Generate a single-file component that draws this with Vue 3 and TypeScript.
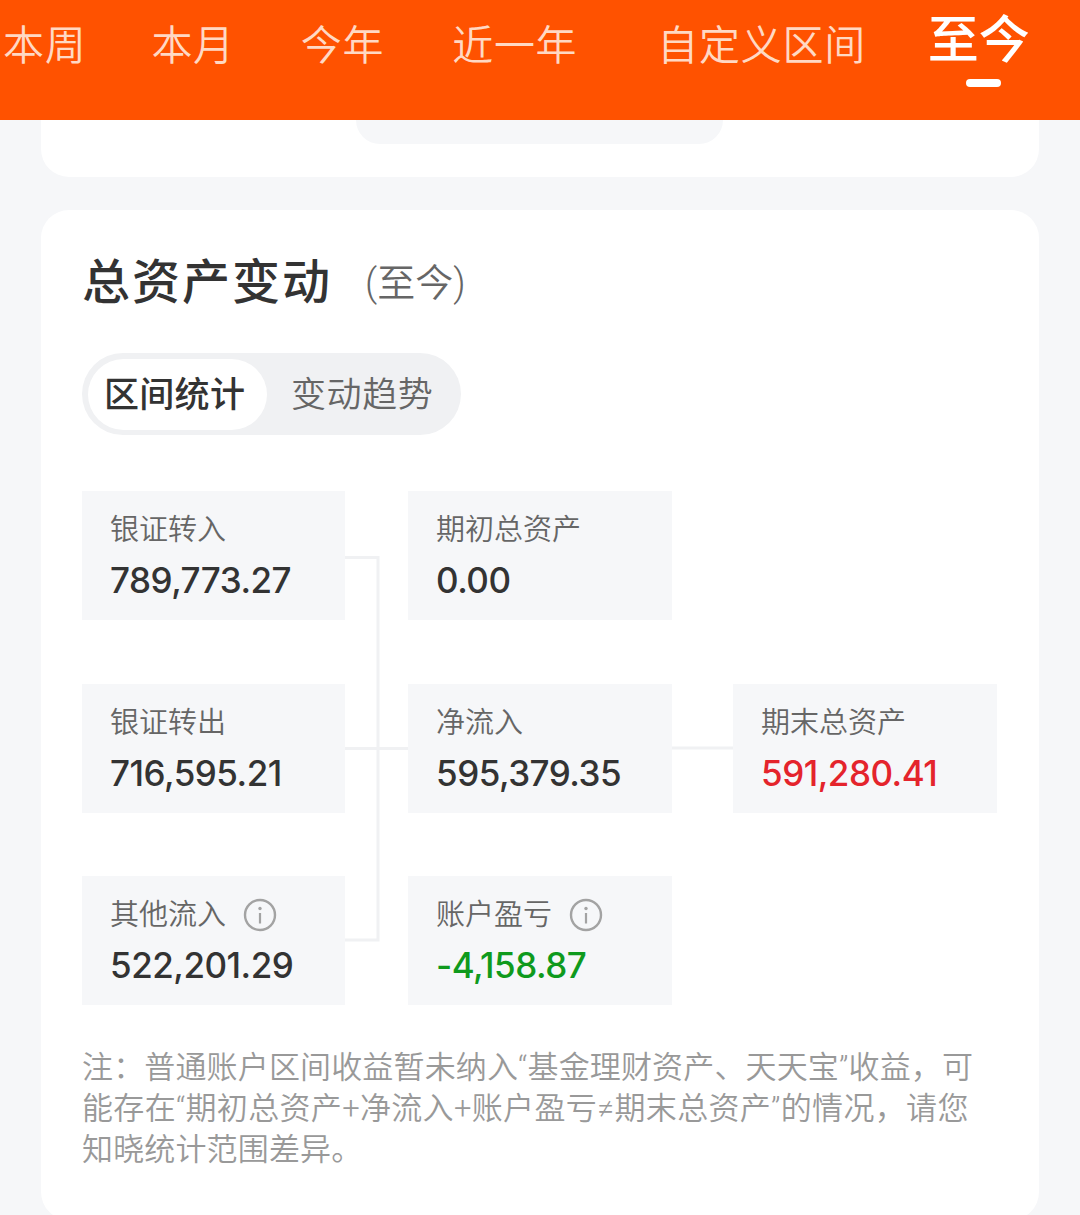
<template>
  <div class="page">
    <!-- 顶部时间区间 -->
    <nav class="tabs">
      <div v-for="tab in tabs" :key="tab" class="tab" :class="{ active: tab === current }">
        {{ tab }}
      </div>
    </nav>

    <section class="card card-stub">
      <div class="stub-pill"></div>
    </section>

    <section class="card card-main">
      <header class="title-row">
        <h2 class="title">总资产变动</h2>
        <span class="range">(至今)</span>
      </header>

      <div class="segment">
        <div class="seg-item on">区间统计</div>
        <div class="seg-item">变动趋势</div>
      </div>

      <div class="flow">
        <div v-for="cell in cells" :key="cell.label" class="cell" :class="cell.area">
          <div class="cell-label">
            {{ cell.label }}
            <svg v-if="cell.info" class="info" viewBox="0 0 34 34" width="34" height="34">
              <circle cx="17" cy="17" r="15" fill="none" stroke="#a3a3a3" stroke-width="2.4" />
              <circle cx="17" cy="10.5" r="1.7" fill="#a3a3a3" />
              <path d="M17 15v10.5" stroke="#a3a3a3" stroke-width="2.2" fill="none" />
            </svg>
          </div>
          <div class="cell-value" :class="cell.tone">{{ cell.value }}</div>
        </div>

        <svg class="link link-left" viewBox="0 0 63 514" width="63" height="514">
          <path d="M0 66.5H33V449H0M0 257.5H63" fill="none" stroke="#f0f1f3" stroke-width="3" />
        </svg>
        <svg class="link link-right" viewBox="0 0 61 129" width="61" height="129">
          <path d="M0 64H61" fill="none" stroke="#f0f1f3" stroke-width="3" />
        </svg>
      </div>

      <p class="note">
        注：普通账户区间收益暂未纳入“基金理财资产、天天宝”收益，可<br /><span class="note-wide">能存在“期初总资产+净流入+账户盈亏≠期末总资产”的情况，请您</span><br />知晓统计范围差异。
      </p>
    </section>
  </div>
</template>

<script setup lang="ts">
interface Cell {
  label: string
  value: string
  area: string
  tone?: 'up' | 'down'
  info?: boolean
}

const tabs: string[] = ['本周', '本月', '今年', '近一年', '自定义区间', '至今']
const current = '至今'

const cells: Cell[] = [
  { label: '银证转入', value: '789,773.27', area: 'a-in' },
  { label: '期初总资产', value: '0.00', area: 'a-start' },
  { label: '银证转出', value: '716,595.21', area: 'a-out' },
  { label: '净流入', value: '595,379.35', area: 'a-net' },
  { label: '期末总资产', value: '591,280.41', area: 'a-end', tone: 'up' },
  { label: '其他流入', value: '522,201.29', area: 'a-other', info: true },
  { label: '账户盈亏', value: '-4,158.87', area: 'a-pnl', tone: 'down', info: true }
]
</script>

<style scoped>
.page {
  width: 1080px;
  height: 1215px;
  overflow: hidden;
  background: #f6f7f9;
  font-family: Roboto, "Noto Sans CJK SC", sans-serif;
}

.tabs {
  height: 120px;
  background: #ff5200;
  display: flex;
  align-items: flex-start;
  padding-left: 3px;
  box-sizing: border-box;
}

.tab {
  position: relative;
  margin-top: 22px;
  font-size: 41px;
  line-height: 48px;
  font-weight: 350;
  letter-spacing: 0.7px;
  color: #ffd9c4;
  white-space: nowrap;
}

.tab:nth-child(2) { margin-left: 65px; }
.tab:nth-child(3) { margin-left: 66px; }
.tab:nth-child(4) { margin-left: 68px; }
.tab:nth-child(5) { margin-left: 80px; }
.tab:nth-child(6) { margin-left: 62px; }

.tab.active {
  margin-top: 15px;
  font-size: 51px;
  line-height: 52px;
  font-weight: 500;
  letter-spacing: 0;
  color: #fff;
}

.tab.active::after {
  content: '';
  position: absolute;
  left: 38px;
  top: 64px;
  width: 35px;
  height: 8px;
  border-radius: 4px;
  background: #fff;
}

.card {
  margin: 0 41px;
  background: #fff;
}

.card-stub {
  height: 57px;
  border-radius: 0 0 28px 28px;
  display: flex;
  justify-content: center;
  margin-bottom: 33px;
}

.stub-pill {
  width: 367px;
  height: 24px;
  margin-left: -1px;
  background: #f6f7f9;
  border-radius: 0 0 28px 28px;
}

.card-main {
  border-radius: 28px;
  height: 1010px;
  padding: 41px 41px 0;
  box-sizing: border-box;
}

.title-row {
  display: flex;
  align-items: center;
  height: 64px;
}

.title {
  margin: 0;
  font-size: 48px;
  line-height: 64px;
  font-weight: 500;
  letter-spacing: 2px;
  color: #333;
}

.range {
  margin-left: 33px;
  font-size: 38px;
  line-height: 64px;
  font-weight: 350;
  color: #666;
}

.segment {
  display: inline-flex;
  vertical-align: top;
  margin-top: 38px;
  height: 82px;
  width: 379px;
  padding: 6px 0 5px 6px;
  box-sizing: border-box;
  background: #f0f1f3;
  border-radius: 41px;
}

.seg-item {
  font-size: 35px;
  line-height: 73px;
  color: #666;
  font-weight: 350;
  padding-left: 24px;
  letter-spacing: 0.6px;
}

.seg-item.on {
  width: 179px;
  height: 71px;
  box-sizing: border-box;
  padding-left: 16px;
  background: #fff;
  color: #333;
  font-weight: 500;
  letter-spacing: 0.3px;
  border-radius: 36px;
}

.flow {
  display: grid;
  grid-template-columns: 263px 63px 264px 61px 264px;
  grid-template-rows: 129px 64px 129px 63px 129px;
  margin-top: 56px;
}

.cell {
  background: #f6f7f9;
  padding: 18px 0 0 28px;
  box-sizing: border-box;
}

.a-in { grid-area: 1 / 1; }
.a-start { grid-area: 1 / 3; }
.a-out { grid-area: 3 / 1; }
.a-net { grid-area: 3 / 3; }
.a-end { grid-area: 3 / 5; }
.a-other { grid-area: 5 / 1; }
.a-pnl { grid-area: 5 / 3; }

.link-left {
  grid-area: 1 / 2 / 6 / 3;
  display: block;
}

.link-right {
  grid-area: 3 / 4;
  display: block;
}

.cell-label {
  display: flex;
  align-items: center;
  height: 42px;
  font-size: 29px;
  line-height: 42px;
  font-weight: 350;
  color: #666;
}

.info {
  margin-left: 17px;
  flex: none;
}

.cell-value {
  margin-top: 6px;
  font-family: Inter, Roboto, sans-serif;
  font-size: 35px;
  line-height: 46px;
  font-weight: 500;
  letter-spacing: -0.5px;
  color: #333;
}

.cell-value.up { color: #e4242c; }
.cell-value.down { color: #0f9a1d; }

.note {
  margin: 42px 0 0;
  font-size: 31px;
  line-height: 41px;
  font-weight: 350;
  letter-spacing: 0.15px;
  color: #999;
  white-space: nowrap;
}

.note-wide {
  letter-spacing: 0.32px;
}
</style>

<style>
html, body {
  margin: 0;
  overflow: hidden;
}
</style>
